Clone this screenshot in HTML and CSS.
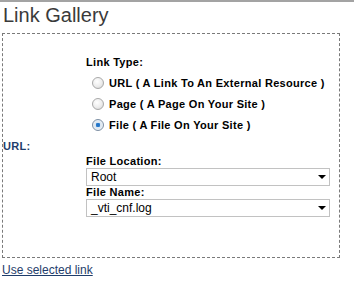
FILE: index.html
```html
<!DOCTYPE html>
<html lang="en">
<head>
  <meta charset="UTF-8" />
  <title>Link Gallery</title>
  <link rel="stylesheet" href="styles.css">
</head>
<body>
  <h1 class="title">Link Gallery</h1>

  <div class="gallery">
    <div class="side-label">URL:</div>
    <div class="fields">
      <div class="field-label">Link Type:</div>
      <label class="option"><input type="radio" name="type"> URL ( A Link To An External Resource )</label>
      <label class="option"><input type="radio" name="type"> Page ( A Page On Your Site )</label>
      <label class="option"><input type="radio" name="type" checked> File ( A File On Your Site )</label>

      <div class="field-label spaced">File Location:</div>
      <div class="select">
        <span>Root</span>
        <span class="arrow"></span>
      </div>
      <div class="field-label">File Name:</div>
      <div class="select">
        <span>_vti_cnf.log</span>
        <span class="arrow"></span>
      </div>
    </div>
  </div>

  <a class="use-link" href="#">Use selected link</a>
</body>
</html>
```

FILE: styles.css
```css
body {
  margin: 0;
  border-top: 2px solid #a3a3a3;
  font-family: 'Liberation Sans', Arial, sans-serif;
  font-size: 11px;
  color: #000;
  background: #fff;
}

.title {
  margin: 0;
  padding: 2px 0 0 3px;
  height: 29px;
  font-size: 20px;
  font-weight: normal;
  color: #3a3a3a;
}

.gallery {
  margin-left: 2px;
  width: 336px;
  height: 223px;
  border: 1px dashed #7a7a7a;
  display: flex;
}

.side-label {
  align-self: center;
  width: 83px;
  font-weight: bold;
  color: #1f3d6b;
  letter-spacing: 0.3px;
}

.fields {
  width: 248px;
  padding-top: 22px;
}

.field-label {
  font-weight: bold;
  height: 13px;
  line-height: 13px;
  letter-spacing: 0.3px;
}

.field-label.spaced {
  margin-top: 20px;
}

.option {
  display: flex;
  align-items: center;
  gap: 5px;
  font-weight: bold;
  letter-spacing: 0.3px;
  height: 21px;
  padding-left: 6px;
}

.option:first-of-type {
  margin-top: 3px;
}

.option input {
  appearance: none;
  margin: 0;
  width: 12px;
  height: 12px;
  border-radius: 50%;
  border: 1px solid #a9a9a9;
  background: radial-gradient(circle at 40% 35%, #ffffff 0%, #ececec 55%, #cfcfcf 100%);
}

.option input:checked {
  border-color: #7d8fa3;
  background: radial-gradient(circle at 50% 50%, #1f6fc0 0%, #2f7fd0 28%, #dbe6f0 36%, #f5f7f9 100%);
}

.select {
  height: 16px;
  border: 1px solid #c2c2c2;
  display: flex;
  align-items: center;
  justify-content: space-between;
  padding: 0 3px 0 4px;
  font-size: 12px;
  margin-right: 4px;
}

.arrow {
  width: 0;
  height: 0;
  border-left: 4px solid transparent;
  border-right: 4px solid transparent;
  border-top: 4px solid #000;
}

.use-link {
  display: block;
  margin: 5px 0 0 2px;
  font-size: 12px;
  color: #1f3d6b;
}
```
